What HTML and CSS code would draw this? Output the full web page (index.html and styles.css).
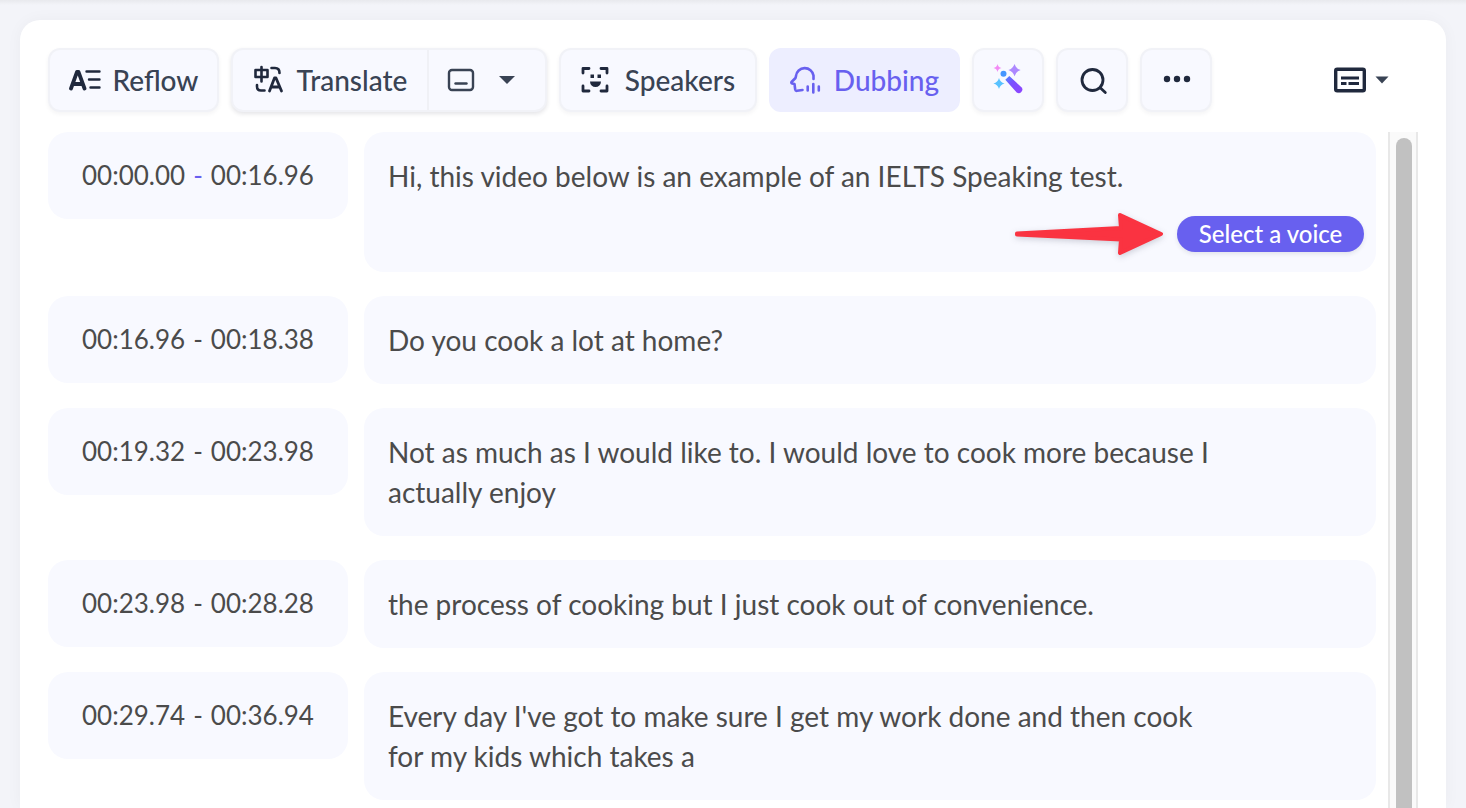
FILE: index.html
```html
<!DOCTYPE html>
<html lang="en">
<head>
<meta charset="utf-8">
<title>Subtitles</title>
<link rel="stylesheet" href="styles.css">
</head>
<body>
<main class="panel">
  <header class="toolbar">
    <button class="tool reflow" type="button">
      <svg class="icon" width="32" height="32" viewBox="0 0 32 32" fill="none" stroke="currentColor" stroke-linecap="round" stroke-linejoin="round"><path stroke-width="3.8" d="M2 24.500 8 7.800h1.500L15.500 24.500M4.500 20h9"/><path stroke-width="2.4" d="M17.500 7.500H30.500M20 15.500H30.500M21.500 23.500H30.500"/></svg>
      <span>Reflow</span>
    </button>
    <div class="split">
      <button class="part translate" type="button">
        <svg class="icon" width="32" height="32" viewBox="0 0 32 32" fill="none" stroke="currentColor" stroke-width="2.6" stroke-linecap="round" stroke-linejoin="round"><path d="M2.500 6h12v7h-12zM8.500 3v14.500M18.500 4h3.500q4.500 0 4.500 5M4 21v1.500q0 4 4 4h3.500"/><path stroke-width="2.800" d="m16.500 27 5-13h1.500L28.500 27M18.500 23h8"/></svg>
        <span>Translate</span>
      </button>
      <button class="part caption" type="button" aria-label="Caption options">
        <svg width="28" height="24" viewBox="0 0 28 24" fill="none" stroke="currentColor" stroke-width="2.400" stroke-linecap="round"><rect x="2" y="2" width="24" height="20" rx="3"/><path d="M8.500 15.500h11"/></svg>
        <svg width="18" height="10" viewBox="0 0 18 10" fill="currentColor"><path d="M1 1h16L9 9z"/></svg>
      </button>
    </div>
    <button class="tool speakers" type="button">
      <svg class="icon" width="32" height="32" viewBox="0 0 32 32" fill="none" stroke="currentColor" stroke-width="2.8" stroke-linecap="round" stroke-linejoin="round"><path d="M2 9V4.500H8M20 4.500h6V9M2 22v5H8M20 27h6V22"/><path fill="currentColor" stroke="none" d="M9.500 10.500h3.500v3.500H9.500zM16.500 10.500H20v3.500h-3.500zM9 17.500h11a5.500 5.500 0 0 1-11 0z"/></svg>
      <span>Speakers</span>
    </button>
    <button class="tool dubbing" type="button" aria-pressed="true">
      <svg class="icon" width="32" height="32" viewBox="0 0 32 32" fill="none" stroke="currentColor" stroke-width="2.600" stroke-linecap="round" stroke-linejoin="round"><path d="M23.500 15V11.500A8.800 8.500 0 0 0 6 12L5.500 14 1.500 18Q1 19 2.200 19.400L4.500 20 5.200 25.500Q5.500 27 7 26.800L12.500 26M17.700 22.500v4M23.300 20v8.500M28.800 22.500v4"/></svg>
      <span>Dubbing</span>
    </button>
    <button class="tool square" type="button" aria-label="Magic tools">
      <svg width="32" height="32" viewBox="0 0 32 32"><defs><linearGradient id="wand" x1="0" y1="0" x2="1" y2="1"><stop offset="0" stop-color="#4b8dff"/><stop offset=".4" stop-color="#7b50ff"/><stop offset="1" stop-color="#8f45ff"/></linearGradient></defs><path fill="#f38af5" d="M5.500 0Q6.200 3.300 9.500 4 6.200 4.700 5.500 8 4.800 4.700 1.500 4 4.800 3.300 5.500 0z"/><path fill="#ad88ff" d="M22.500 0Q24 4.600 28.600 6.100 24 7.600 22.500 12.200 21 7.600 16.400 6.100 21 4.600 22.500 0z"/><path fill="#58c2ff" d="M7 14Q8.200 18.300 12.500 19.500 8.200 20.700 7 25 5.800 20.700 1.500 19.500 5.800 18.300 7 14z"/><circle cx="11.500" cy="9.800" r="3" fill="#4596ff"/><path fill="url(#wand)" d="M13.300 15.800 17.300 12 29.700 23.500a3.600 3.600 0 0 1-5 5z"/></svg>
    </button>
    <button class="tool square" type="button" aria-label="Search">
      <svg width="32" height="32" viewBox="0 0 32 32" fill="none" stroke="currentColor" stroke-width="2.800" stroke-linecap="round"><circle cx="16.500" cy="16" r="10.500"/><path d="m24.500 24 4.800 4.500"/></svg>
    </button>
    <button class="tool square" type="button" aria-label="More">
      <svg width="32" height="32" viewBox="0 0 32 32" fill="currentColor"><circle cx="7" cy="15" r="3.200"/><circle cx="17" cy="15" r="3.200"/><circle cx="27" cy="15" r="3.200"/></svg>
    </button>
    <button class="view" type="button" aria-label="Subtitle view">
      <svg width="32" height="26" viewBox="0 0 32 26" fill="none" stroke="currentColor" stroke-width="3"><rect x="1.700" y="2.200" width="28.600" height="21.600" rx="1.500" stroke-width="3.400"/><path d="M7 11h18M7 16.500h5.500M14.500 16.500H25"/></svg>
      <svg class="caret" width="14" height="8" viewBox="0 0 14 8" fill="currentColor"><path d="M.5.500h13L7 7.500z"/></svg>
    </button>
  </header>
  <section class="transcript">
    <div class="rows">
      <article class="row">
        <div class="time"><span>00:00.00</span><span class="dash active">-</span><span>00:16.96</span></div>
        <div class="card">
          <p class="line">Hi, this video below is an example of an IELTS Speaking test.</p>
          <div class="voice-row">
            <svg class="arrow" width="152" height="48" viewBox="0 0 152 48" fill="#fa3341" stroke="#fa3341" stroke-width="4" stroke-linejoin="round"><path d="M5 23.500 109 18 108 5 149 24 108 43 109 29.500 5 24.500z"/></svg>
            <button class="voice" type="button">Select a voice</button>
          </div>
        </div>
      </article>
      <article class="row">
        <div class="time"><span>00:16.96</span><span class="dash">-</span><span>00:18.38</span></div>
        <div class="card"><p class="line">Do you cook a lot at home?</p></div>
      </article>
      <article class="row">
        <div class="time"><span>00:19.32</span><span class="dash">-</span><span>00:23.98</span></div>
        <div class="card"><p class="line">Not as much as I would like to. I would love to cook more because I actually enjoy</p></div>
      </article>
      <article class="row">
        <div class="time"><span>00:23.98</span><span class="dash">-</span><span>00:28.28</span></div>
        <div class="card"><p class="line">the process of cooking but I just cook out of convenience.</p></div>
      </article>
      <article class="row">
        <div class="time"><span>00:29.74</span><span class="dash">-</span><span>00:36.94</span></div>
        <div class="card"><p class="line">Every day I've got to make sure I get my work done and then cook for my kids which takes a</p></div>
      </article>
    </div>
    <div class="track"><div class="thumb"></div></div>
  </section>
</main>
</body>
</html>
```
FILE: styles.css
```css
* { box-sizing: border-box; }
body {
  margin: 0;
  height: 100vh;
  overflow: hidden;
  padding: 20px 20px 0;
  display: flex;
  background: linear-gradient(#e8e9ed, #f3f4f9 5px);
  font-family: Lato, "Liberation Sans", sans-serif;
  color: #4b4b4b;
}
button {
  font: inherit;
  color: inherit;
  margin: 0;
  border: 0;
  background: none;
  cursor: pointer;
}
svg { display: block; flex: none; }
.panel {
  flex: 1;
  min-width: 0;
  display: flex;
  flex-direction: column;
  gap: 20px;
  padding: 28px 28px 0;
  background: #fff;
  border-radius: 20px 20px 0 0;
  box-shadow: 0 0 16px rgba(30, 35, 60, .04);
}
.toolbar {
  display: flex;
  gap: 12px;
  height: 64px;
  font-size: 28px;
  font-weight: 500;
  color: #394354;
}
.tool, .split {
  border: 2px solid #f1f2f7;
  border-radius: 12px;
  background: #f8f9ff;
  box-shadow: 0 2px 4px rgba(30, 35, 60, .05);
}
.tool {
  display: flex;
  align-items: center;
  justify-content: center;
  gap: 12px;
  padding: 0;
}
.icon, .square, .view { color: #20293d; }
.reflow { width: 171px; }
.split { display: flex; width: 316px; box-shadow: 0 2px 4px rgba(30, 35, 60, .12); }
.part { display: flex; align-items: center; padding: 0; }
.translate {
  width: 196px;
  justify-content: center;
  gap: 12px;
  border-right: 2px solid #f0f1f6;
}
.caption { flex: 1; padding-left: 18px; gap: 23px; }
.speakers { width: 198px; }
.dubbing {
  width: 191px;
  background: #edeeff;
  border-color: #edeeff;
  box-shadow: none;
  color: #6860ef;
}
.dubbing .icon { color: inherit; }
.square { width: 72px; }
.view {
  display: flex;
  align-items: center;
  gap: 9px;
  margin-left: auto;
  margin-right: 29px;
  padding: 0;
}
.caret { color: #394354; }
.transcript {
  flex: 1;
  min-height: 0;
  display: flex;
  gap: 12px;
}
.rows {
  flex: 1;
  min-width: 0;
  display: flex;
  flex-direction: column;
  gap: 24px;
  overflow: hidden;
}
.row {
  display: flex;
  flex: none;
  align-items: flex-start;
  gap: 16px;
}
.time {
  flex: none;
  width: 300px;
  height: 87px;
  padding-bottom: 2px;
  display: flex;
  align-items: center;
  justify-content: center;
  gap: 8px;
  border-radius: 20px;
  background: #f8f9ff;
  font-size: 26px;
}
.active { color: #6860ef; }
.card {
  flex: 1;
  min-width: 0;
  padding: 24px;
  border-radius: 20px;
  background: #f8f9ff;
  font-size: 28px;
  line-height: 40px;
}
.line { margin: 0; max-width: 832px; }
.voice-row {
  display: flex;
  align-items: center;
  justify-content: flex-end;
  gap: 13px;
  height: 52px;
  margin: 12px -12px -12px 0;
}
.arrow { filter: drop-shadow(0 2px 3px rgba(30, 35, 60, .2)); }
.voice {
  width: 187px;
  height: 36px;
  padding: 0;
  border-radius: 18px;
  background: #6860ef;
  color: #fff;
  font-size: 24px;
  font-weight: 500;
  line-height: 36px;
  box-shadow: 0 2px 4px rgba(30, 35, 60, .1);
}
.track {
  flex: none;
  width: 30px;
  padding: 6px 6px 0;
  border: solid #e8e8e8;
  border-width: 0 2px;
  background: #fafafa;
}
.thumb {
  width: 16px;
  height: 100%;
  border-radius: 8px 8px 0 0;
  background: #c1c1c1;
}
```
